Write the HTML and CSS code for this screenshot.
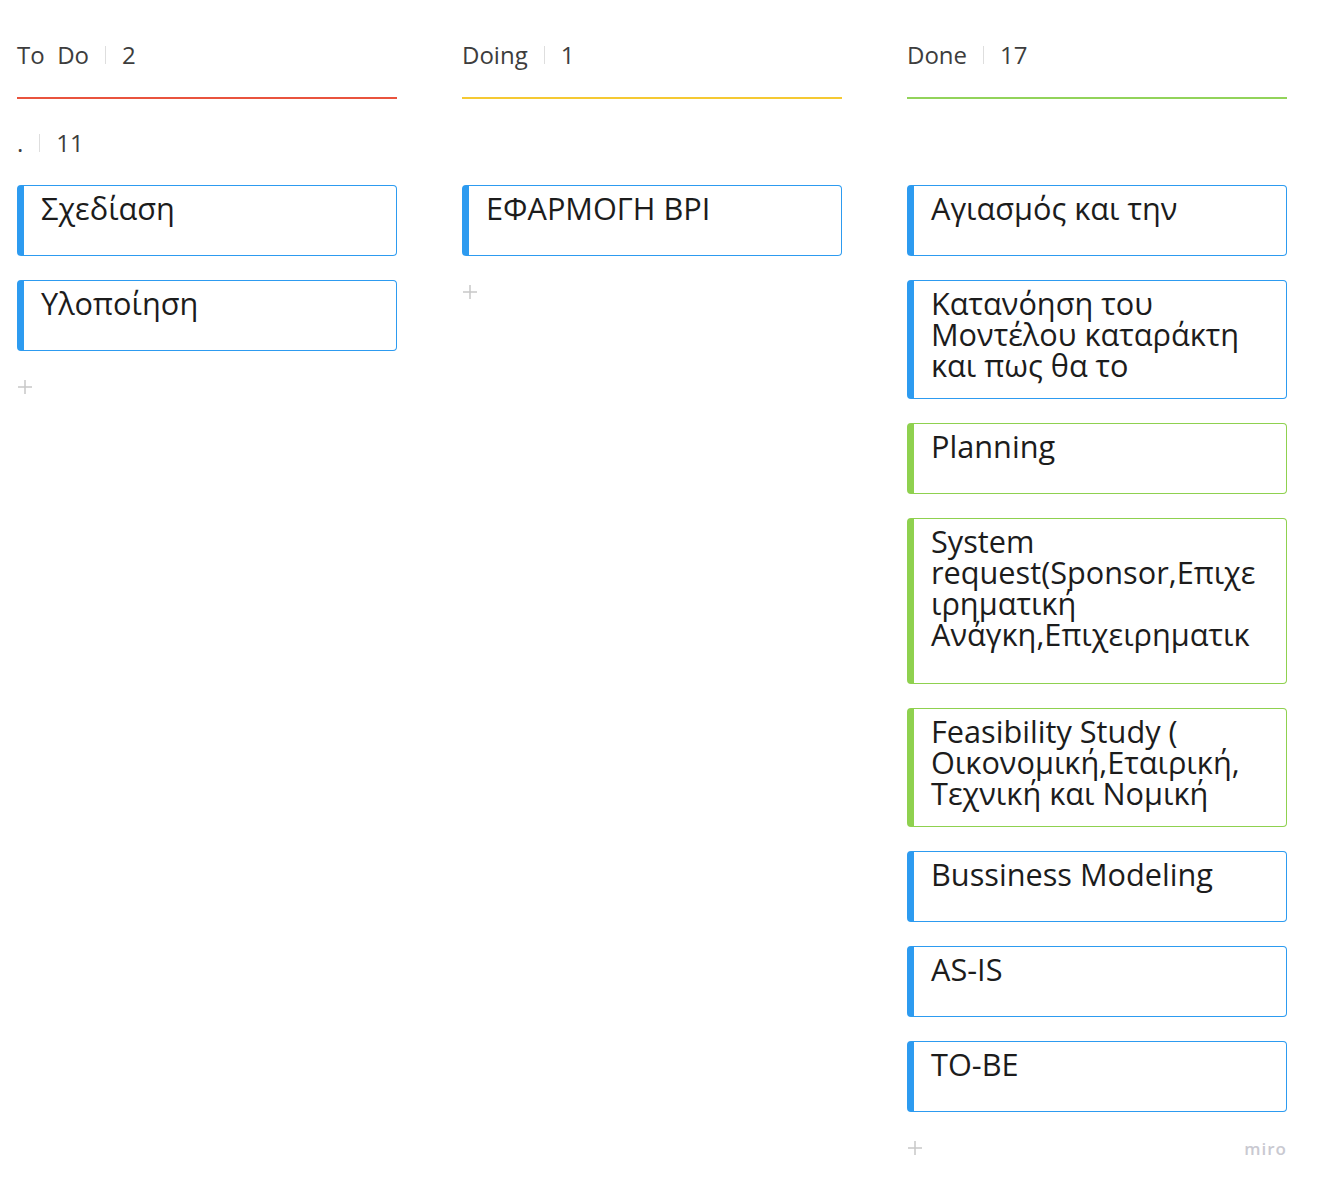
FILE: index.html
```html
<!DOCTYPE html>
<html lang="el">
<head>
<meta charset="utf-8">
<title>Board</title>
<link rel="stylesheet" href="styles.css">
</head>
<body>
<div class="board">
  <section class="col col--todo">
    <header class="col-head"><span class="col-title">To  Do</span><span class="sep"></span><span class="count">2</span></header>
    <div class="col-line"></div>
    <div class="group-head"><span>.</span><span class="sep"></span><span>11</span></div>
    <div class="cards">
      <div class="card card--blue"><div class="card-text">Σχεδίαση</div></div>
      <div class="card card--blue"><div class="card-text">Υλοποίηση</div></div>
    </div>
    <div class="col-foot">
      <svg class="plus" viewBox="0 0 14 14"><path d="M7 0v14M0 7h14"/></svg>
    </div>
  </section>

  <section class="col col--doing">
    <header class="col-head"><span class="col-title">Doing</span><span class="sep"></span><span class="count">1</span></header>
    <div class="col-line"></div>
    <div class="group-head"></div>
    <div class="cards">
      <div class="card card--blue"><div class="card-text">ΕΦΑΡΜΟΓΗ BPI</div></div>
    </div>
    <div class="col-foot">
      <svg class="plus" viewBox="0 0 14 14"><path d="M7 0v14M0 7h14"/></svg>
    </div>
  </section>

  <section class="col col--done">
    <header class="col-head"><span class="col-title">Done</span><span class="sep"></span><span class="count">17</span></header>
    <div class="col-line"></div>
    <div class="group-head"></div>
    <div class="cards">
      <div class="card card--blue"><div class="card-text">Αγιασμός και την</div></div>
      <div class="card card--blue"><div class="card-text">Κατανόηση του Μοντέλου καταράκτη και πως θα το</div></div>
      <div class="card card--green"><div class="card-text">Planning</div></div>
      <div class="card card--green card--tall"><div class="card-text">System request(Sponsor,Επιχειρηματική Ανάγκη,Επιχειρηματικ</div></div>
      <div class="card card--green"><div class="card-text">Feasibility Study ( Οικονομική,Εταιρική, Τεχνική και Νομική</div></div>
      <div class="card card--blue"><div class="card-text">Bussiness Modeling</div></div>
      <div class="card card--blue"><div class="card-text">AS-IS</div></div>
      <div class="card card--blue"><div class="card-text">TO-BE</div></div>
    </div>
    <div class="col-foot">
      <svg class="plus" viewBox="0 0 14 14"><path d="M7 0v14M0 7h14"/></svg>
      <span class="brand">miro</span>
    </div>
  </section>
</div>
</body>
</html>
```

FILE: styles.css
```css
html, body {
  margin: 0;
  background: #ffffff;
}

body {
  font-family: "Open Sans", "Noto Sans", sans-serif;
}

.board {
  display: flex;
  align-items: flex-start;
  gap: 65px;
  padding: 39px 17px 0 17px;
}

.col {
  flex: none;
  width: 380px;
}

.col-head,
.group-head {
  display: flex;
  align-items: center;
  height: 32px;
  font-size: 24px;
  line-height: 32px;
  color: #3d3d3d;
}

.col-title {
  white-space: pre;
}

.sep {
  width: 1px;
  height: 18px;
  background: #dedede;
  margin: 0 16px;
}

.col-line {
  height: 2px;
  margin-top: 26px;
}

.col--todo .col-line { background: #e9533d; }
.col--doing .col-line { background: #f5c933; }
.col--done .col-line { background: #92d35a; }

.group-head {
  margin-top: 28px;
}

.cards {
  margin-top: 26px;
  display: flex;
  flex-direction: column;
  gap: 24px;
}

.card {
  box-sizing: border-box;
  min-height: 71px;
  border: 1px solid;
  border-left-width: 7px;
  border-radius: 4px;
  padding: 7px 24px 17px 17px;
  background: #ffffff;
}

.card--blue { border-color: #2d9bf0; }
.card--green { border-color: #8fd14f; }

.card-text {
  font-size: 30.7px;
  line-height: 31px;
  color: #1c1c1c;
  overflow-wrap: break-word;
}

.card--tall {
  height: 166px;
}

.col-foot {
  margin-top: 29px;
  height: 14px;
  display: flex;
  align-items: center;
  justify-content: space-between;
}

.plus {
  width: 14px;
  height: 14px;
  margin-left: 1px;
  fill: none;
  stroke: #c8c8c8;
  stroke-width: 1.5;
}

.brand {
  font-size: 17px;
  font-weight: 600;
  color: #c9c9d1;
  letter-spacing: 1px;
}
```
